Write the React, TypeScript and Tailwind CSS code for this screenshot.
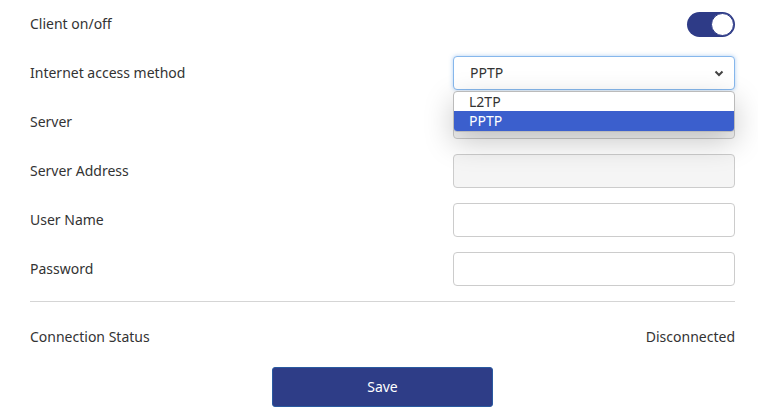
import { useState } from "react";

const font = { fontFamily: '"Noto Sans", "Liberation Sans", sans-serif' };

function Row({ label, children }: { label: string; children: React.ReactNode }) {
  return (
    <div className="flex h-[34px] items-center justify-between">
      <span className="pb-[2px] text-[14px] text-[#333]">{label}</span>
      {children}
    </div>
  );
}

export default function App() {
  const [enabled, setEnabled] = useState(true);
  const [method] = useState("PPTP");

  return (
    <div className="min-h-[417px] bg-white pl-[30px] pr-[23px] pt-[7px]" style={font}>
      <div className="flex flex-col gap-[15px]">
        <Row label="Client on/off">
          <button
            onClick={() => setEnabled(!enabled)}
            className="relative h-[25px] w-[48px] rounded-full bg-[#2e3b87]"
          >
            <span className="absolute right-[1px] top-[1px] h-[23px] w-[23px] rounded-full border border-[#2e3b87] bg-white" />
          </button>
        </Row>

        <Row label="Internet access method">
          <div className="relative w-[282px]">
            <div className="flex h-[34px] items-center justify-between rounded-[4px] border border-[#86b7ec] bg-white pl-[16px] pr-[10px] text-[14px] text-[#333] shadow-[0_0_4px_rgba(100,160,230,0.5)]">
              <span className="pb-[2px]">{method}</span>
              <svg width="10" height="7" viewBox="0 0 10 7">
                <path d="M1.5 1.5 L5 5 L8.5 1.5" fill="none" stroke="#444" strokeWidth="2" />
              </svg>
            </div>
            <div className="absolute left-0 top-[35px] z-10 w-[282px] overflow-hidden rounded-[4px] border border-[#bbb] bg-white text-[14px] shadow-[0_10px_30px_rgba(0,0,0,0.22)]">
              <div className="flex h-[19px] items-center pb-[1px] pl-[15px] text-[#333]">L2TP</div>
              <div className="flex h-[20px] items-center pb-[1px] bg-[#3b5fcd] pl-[15px] text-white">PPTP</div>
            </div>
          </div>
        </Row>

        <Row label="Server">
          <input disabled className="h-[34px] w-[282px] rounded-[4px] border border-[#ccc] bg-[#f5f5f5]" />
        </Row>

        <Row label="Server Address">
          <input disabled className="h-[34px] w-[282px] rounded-[4px] border border-[#ccc] bg-[#f5f5f5]" />
        </Row>

        <Row label="User Name">
          <input className="h-[34px] w-[282px] rounded-[4px] border border-[#ccc] bg-white" />
        </Row>

        <Row label="Password">
          <input type="password" className="h-[34px] w-[282px] rounded-[4px] border border-[#ccc] bg-white" />
        </Row>
      </div>

      <div className="mt-[15px] h-px bg-[#d5d5d5]" />

      <div className="mt-[18px] flex h-[34px] items-center justify-between pb-[2px] text-[14px] text-[#333]">
        <span>Connection Status</span>
        <span>Disconnected</span>
      </div>

      <div className="mt-[13px] flex justify-center">
        <button className="h-[40px] w-[221px] rounded-[3px] border border-[#2a5aa0] bg-[#2e3d87] pb-[1px] text-[14px] text-white">
          Save
        </button>
      </div>
    </div>
  );
}
